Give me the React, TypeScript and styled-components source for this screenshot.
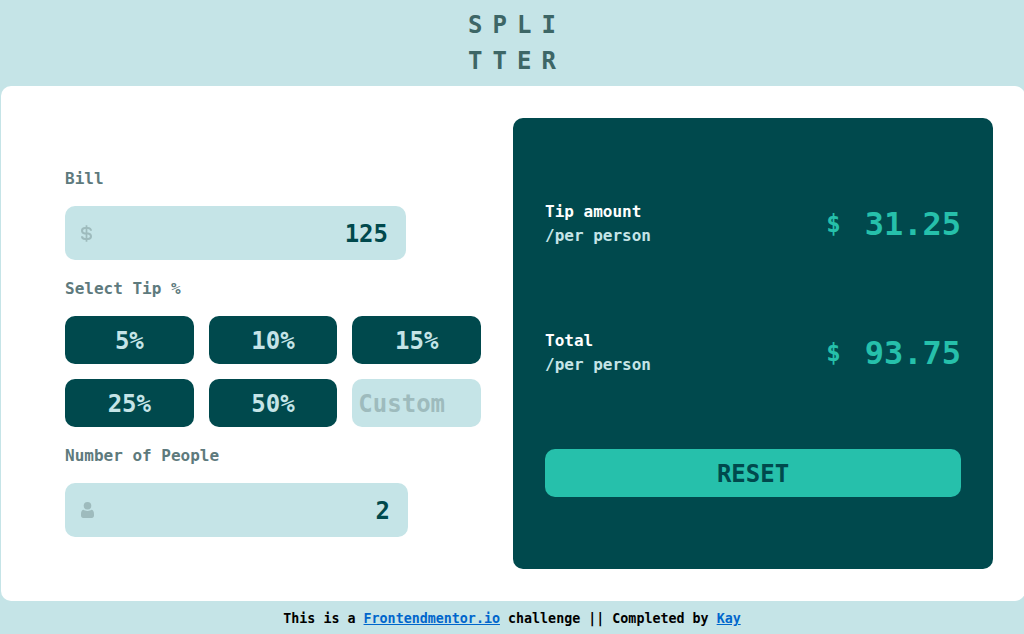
import React, { useState } from "react";
import styled, { createGlobalStyle } from "styled-components";

const colors = {
  page: "#c5e4e7",
  card: "#ffffff",
  dark: "#00494d",
  accent: "#26c0ab",
  label: "#5e7a7d",
  logo: "#3d6666",
  muted: "#9ebbbd",
  link: "#0066cc",
};

const GlobalStyle = createGlobalStyle`
  *, *::before, *::after { box-sizing: border-box; }
  body {
    margin: 0;
    background: ${colors.page};
    font-family: "DejaVu Sans Mono", "Liberation Mono", monospace;
    font-size: 16px;
    font-weight: 700;
    line-height: 24px;
    color: #000;
  }
`;

const Page = styled.div`
  overflow: hidden;
`;

const Header = styled.header`
  display: flex;
  justify-content: center;
  padding: 7px 0;
`;

const Logo = styled.h1`
  margin: 0;
  padding-left: 10px;
  font-size: 24px;
  line-height: 36px;
  letter-spacing: 10px;
  color: ${colors.logo};
`;

const Card = styled.main`
  display: grid;
  grid-template-columns: 1fr 1fr;
  width: 100%;
  margin-left: 1px;
  padding: 32px;
  border-radius: 10px;
  background: ${colors.card};

  @media (max-width: 760px) {
    grid-template-columns: 1fr;
    gap: 32px;
  }
`;

const Form = styled.form`
  display: flex;
  flex-direction: column;
  justify-content: center;
  gap: 17px;
  padding: 17px 32px 0;
`;

const Field = styled.div`
  display: flex;
  flex-direction: column;
  gap: 15px;
`;

const Label = styled.label`
  color: ${colors.label};
`;

const Bar = styled.div`
  display: flex;
  align-items: center;
  width: fit-content;
  max-width: 100%;
  height: 54px;
  padding: 0 16px;
  border-radius: 10px;
  background: ${colors.page};
`;

const Prefix = styled.span`
  display: flex;
  flex: none;
  color: ${colors.muted};
`;

const BarInput = styled.input`
  width: 298px;
  min-width: 0;
  height: 36px;
  padding: 2px 2px 0;
  border: 0;
  outline: 0;
  background: transparent;
  color: ${colors.dark};
  font: inherit;
  font-size: 24px;
  text-align: right;
`;

const Tips = styled.div`
  display: grid;
  grid-template-columns: repeat(3, 1fr);
  gap: 15px;
`;

const Button = styled.button<{ $accent?: boolean }>`
  height: 48px;
  padding: 2px 0 0;
  border: 0;
  border-radius: 10px;
  background: ${(p) => (p.$accent ? colors.accent : colors.dark)};
  color: ${(p) => (p.$accent ? colors.dark : colors.page)};
  font: inherit;
  font-size: 24px;
  cursor: pointer;
`;

const CustomTip = styled.input`
  width: 100%;
  min-width: 0;
  height: 48px;
  padding: 2px 6px 0;
  border: 0;
  border-radius: 10px;
  background: ${colors.page};
  color: ${colors.dark};
  font: inherit;
  font-size: 24px;

  &::placeholder {
    color: ${colors.muted};
    opacity: 1;
  }
`;

const Results = styled.section`
  display: flex;
  flex-direction: column;
  padding: 82px 32px 72px;
  border-radius: 10px;
  background: ${colors.dark};
`;

const Rows = styled.div`
  display: flex;
  flex-direction: column;
  gap: 81px;
  margin-bottom: 72px;
`;

const Row = styled.div`
  display: flex;
  align-items: center;
  justify-content: space-between;
`;

const RowTitle = styled.div`
  color: #fff;
`;

const RowNote = styled.div`
  color: ${colors.page};
`;

const Amount = styled.output`
  display: flex;
  align-items: center;
  gap: 24px;
  color: ${colors.accent};
  font-size: 32px;
  line-height: 48px;
`;

const Currency = styled.span`
  font-size: 24px;
`;

const Footer = styled.footer`
  padding: 6px 16px 3px;
  text-align: center;
`;

const Credits = styled.small`
  display: block;
`;

const Link = styled.a`
  color: ${colors.link};
`;

const DollarIcon = () => (
  <svg
    width="11"
    height="17"
    viewBox="4 0 16 24"
    fill="none"
    stroke="currentColor"
    strokeWidth="3"
    aria-hidden="true"
  >
    <path d="M12 0v24" strokeWidth="2.500" />
    <path d="M18.500 8c0-2.600-2-4-4.500-4h-4C7.500 4 5.500 5.700 5.500 7.900S7 11.400 9.500 12h5c2.500.5 4 1.800 4 4s-2 4-4.500 4h-4c-2.500 0-4.500-1.400-4.500-4" />
  </svg>
);

const PersonIcon = () => (
  <svg width="13" height="16" viewBox="0 0 13 16" fill="currentColor" aria-hidden="true">
    <circle cx="6.5" cy="3.8" r="3.8" />
    <path d="M2.6 7.7C1 7.7 0 9.4 0 12v1.6C0 15.2.9 16 2.2 16h8.600c1.300 0 2.200-.8 2.200-2.400V12c0-2.600-1-4.300-2.600-4.300-.8.7-2.200 1.200-3.900 1.200s-3.100-.5-3.900-1.200z" />
  </svg>
);

const tips = [5, 10, 15, 25, 50];

function ResultRow({ title, value }: { title: string; value: number }) {
  return (
    <Row>
      <div>
        <RowTitle>{title}</RowTitle>
        <RowNote>/per person</RowNote>
      </div>
      <Amount aria-label={title}>
        <Currency>$</Currency>
        <span>{value.toFixed(2)}</span>
      </Amount>
    </Row>
  );
}

export default function App() {
  const [bill, setBill] = useState("125");
  const [people, setPeople] = useState("2");
  const [tip, setTip] = useState(50);
  const [custom, setCustom] = useState("");

  const count = Number(people) || 1;
  const tipAmount = ((Number(bill) || 0) * tip) / 100 / count;
  const total = (Number(bill) || 0) / count + tipAmount;

  const chooseTip = (value: number) => {
    setTip(value);
    setCustom("");
  };

  const reset = () => {
    setBill("");
    setPeople("");
    chooseTip(0);
  };

  return (
    <Page>
      <GlobalStyle />
      <Header>
        <Logo>
          SPLI
          <br />
          TTER
        </Logo>
      </Header>
      <Card>
        <Form onSubmit={(e) => e.preventDefault()}>
          <Field>
            <Label htmlFor="bill">Bill</Label>
            <Bar>
              <Prefix>
                <DollarIcon />
              </Prefix>
              <BarInput
                id="bill"
                inputMode="decimal"
                value={bill}
                onChange={(e) => setBill(e.target.value)}
              />
            </Bar>
          </Field>
          <Field>
            <Label htmlFor="custom">Select Tip %</Label>
            <Tips>
              {tips.map((value) => (
                <Button key={value} type="button" onClick={() => chooseTip(value)}>
                  {value}%
                </Button>
              ))}
              <CustomTip
                id="custom"
                inputMode="decimal"
                placeholder="Custom"
                value={custom}
                onChange={(e) => {
                  setCustom(e.target.value);
                  setTip(Number(e.target.value) || 0);
                }}
              />
            </Tips>
          </Field>
          <Field>
            <Label htmlFor="people">Number of People</Label>
            <Bar>
              <Prefix>
                <PersonIcon />
              </Prefix>
              <BarInput
                id="people"
                inputMode="numeric"
                value={people}
                onChange={(e) => setPeople(e.target.value)}
              />
            </Bar>
          </Field>
        </Form>
        <Results>
          <Rows>
            <ResultRow title="Tip amount" value={tipAmount} />
            <ResultRow title="Total" value={total} />
          </Rows>
          <Button type="button" $accent onClick={reset}>
            RESET
          </Button>
        </Results>
      </Card>
      <Footer>
        <Credits>
          This is a <Link href="https://www.frontendmentor.io">Frontendmentor.io</Link> challenge ||
          Completed by <Link href="#kay">Kay</Link>
        </Credits>
      </Footer>
    </Page>
  );
}
